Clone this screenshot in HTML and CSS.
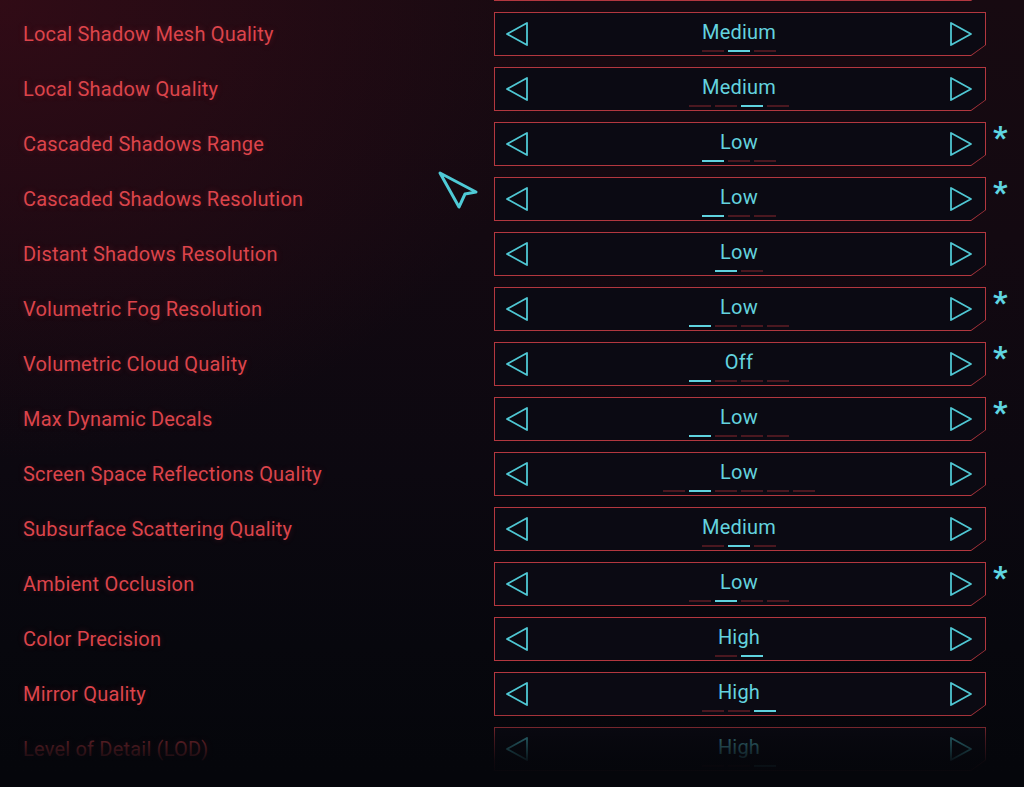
FILE: index.html
```html
<!DOCTYPE html>
<html>
<head>
<meta charset="utf-8">
<link rel="stylesheet" href="styles.css">
</head>
<body>
<div class="screen">
  <div class="list">
    <div class="row">
      <div class="label"></div>
      <div class="sel"><div class="sel-in"></div></div>
      <div class="mark"></div>
    </div>

    <div class="row">
      <div class="label">Local Shadow Mesh Quality</div>
      <div class="sel"><div class="sel-in">
        <svg class="arr" viewBox="0 0 24 26"><polygon points="22,2 2,13 22,24"/></svg>
        <div class="val"><span class="txt">Medium</span><div class="dashes"><i></i><i class="on"></i><i></i></div></div>
        <svg class="arr" viewBox="0 0 24 26"><polygon points="2,2 22,13 2,24"/></svg>
      </div></div>
      <div class="mark"></div>
    </div>

    <div class="row">
      <div class="label">Local Shadow Quality</div>
      <div class="sel"><div class="sel-in">
        <svg class="arr" viewBox="0 0 24 26"><polygon points="22,2 2,13 22,24"/></svg>
        <div class="val"><span class="txt">Medium</span><div class="dashes"><i></i><i></i><i class="on"></i><i></i></div></div>
        <svg class="arr" viewBox="0 0 24 26"><polygon points="2,2 22,13 2,24"/></svg>
      </div></div>
      <div class="mark"></div>
    </div>

    <div class="row">
      <div class="label">Cascaded Shadows Range</div>
      <div class="sel"><div class="sel-in">
        <svg class="arr" viewBox="0 0 24 26"><polygon points="22,2 2,13 22,24"/></svg>
        <div class="val"><span class="txt">Low</span><div class="dashes"><i class="on"></i><i></i><i></i></div></div>
        <svg class="arr" viewBox="0 0 24 26"><polygon points="2,2 22,13 2,24"/></svg>
      </div></div>
      <div class="mark">*</div>
    </div>

    <div class="row">
      <div class="label">Cascaded Shadows Resolution</div>
      <div class="sel"><div class="sel-in">
        <svg class="arr" viewBox="0 0 24 26"><polygon points="22,2 2,13 22,24"/></svg>
        <div class="val"><span class="txt">Low</span><div class="dashes"><i class="on"></i><i></i><i></i></div></div>
        <svg class="arr" viewBox="0 0 24 26"><polygon points="2,2 22,13 2,24"/></svg>
      </div></div>
      <div class="mark">*</div>
    </div>

    <div class="row">
      <div class="label">Distant Shadows Resolution</div>
      <div class="sel"><div class="sel-in">
        <svg class="arr" viewBox="0 0 24 26"><polygon points="22,2 2,13 22,24"/></svg>
        <div class="val"><span class="txt">Low</span><div class="dashes"><i class="on"></i><i></i></div></div>
        <svg class="arr" viewBox="0 0 24 26"><polygon points="2,2 22,13 2,24"/></svg>
      </div></div>
      <div class="mark"></div>
    </div>

    <div class="row">
      <div class="label">Volumetric Fog Resolution</div>
      <div class="sel"><div class="sel-in">
        <svg class="arr" viewBox="0 0 24 26"><polygon points="22,2 2,13 22,24"/></svg>
        <div class="val"><span class="txt">Low</span><div class="dashes"><i class="on"></i><i></i><i></i><i></i></div></div>
        <svg class="arr" viewBox="0 0 24 26"><polygon points="2,2 22,13 2,24"/></svg>
      </div></div>
      <div class="mark">*</div>
    </div>

    <div class="row">
      <div class="label">Volumetric Cloud Quality</div>
      <div class="sel"><div class="sel-in">
        <svg class="arr" viewBox="0 0 24 26"><polygon points="22,2 2,13 22,24"/></svg>
        <div class="val"><span class="txt">Off</span><div class="dashes"><i class="on"></i><i></i><i></i><i></i></div></div>
        <svg class="arr" viewBox="0 0 24 26"><polygon points="2,2 22,13 2,24"/></svg>
      </div></div>
      <div class="mark">*</div>
    </div>

    <div class="row">
      <div class="label">Max Dynamic Decals</div>
      <div class="sel"><div class="sel-in">
        <svg class="arr" viewBox="0 0 24 26"><polygon points="22,2 2,13 22,24"/></svg>
        <div class="val"><span class="txt">Low</span><div class="dashes"><i class="on"></i><i></i><i></i><i></i></div></div>
        <svg class="arr" viewBox="0 0 24 26"><polygon points="2,2 22,13 2,24"/></svg>
      </div></div>
      <div class="mark">*</div>
    </div>

    <div class="row">
      <div class="label">Screen Space Reflections Quality</div>
      <div class="sel"><div class="sel-in">
        <svg class="arr" viewBox="0 0 24 26"><polygon points="22,2 2,13 22,24"/></svg>
        <div class="val"><span class="txt">Low</span><div class="dashes"><i></i><i class="on"></i><i></i><i></i><i></i><i></i></div></div>
        <svg class="arr" viewBox="0 0 24 26"><polygon points="2,2 22,13 2,24"/></svg>
      </div></div>
      <div class="mark"></div>
    </div>

    <div class="row">
      <div class="label">Subsurface Scattering Quality</div>
      <div class="sel"><div class="sel-in">
        <svg class="arr" viewBox="0 0 24 26"><polygon points="22,2 2,13 22,24"/></svg>
        <div class="val"><span class="txt">Medium</span><div class="dashes"><i></i><i class="on"></i><i></i></div></div>
        <svg class="arr" viewBox="0 0 24 26"><polygon points="2,2 22,13 2,24"/></svg>
      </div></div>
      <div class="mark"></div>
    </div>

    <div class="row">
      <div class="label">Ambient Occlusion</div>
      <div class="sel"><div class="sel-in">
        <svg class="arr" viewBox="0 0 24 26"><polygon points="22,2 2,13 22,24"/></svg>
        <div class="val"><span class="txt">Low</span><div class="dashes"><i></i><i class="on"></i><i></i><i></i></div></div>
        <svg class="arr" viewBox="0 0 24 26"><polygon points="2,2 22,13 2,24"/></svg>
      </div></div>
      <div class="mark">*</div>
    </div>

    <div class="row">
      <div class="label">Color Precision</div>
      <div class="sel"><div class="sel-in">
        <svg class="arr" viewBox="0 0 24 26"><polygon points="22,2 2,13 22,24"/></svg>
        <div class="val"><span class="txt">High</span><div class="dashes"><i></i><i class="on"></i></div></div>
        <svg class="arr" viewBox="0 0 24 26"><polygon points="2,2 22,13 2,24"/></svg>
      </div></div>
      <div class="mark"></div>
    </div>

    <div class="row">
      <div class="label">Mirror Quality</div>
      <div class="sel"><div class="sel-in">
        <svg class="arr" viewBox="0 0 24 26"><polygon points="22,2 2,13 22,24"/></svg>
        <div class="val"><span class="txt">High</span><div class="dashes"><i></i><i></i><i class="on"></i></div></div>
        <svg class="arr" viewBox="0 0 24 26"><polygon points="2,2 22,13 2,24"/></svg>
      </div></div>
      <div class="mark"></div>
    </div>

    <div class="row">
      <div class="label">Level of Detail (LOD)</div>
      <div class="sel"><div class="sel-in">
        <svg class="arr" viewBox="0 0 24 26"><polygon points="22,2 2,13 22,24"/></svg>
        <div class="val"><span class="txt">High</span><div class="dashes"><i></i><i></i><i class="on"></i></div></div>
        <svg class="arr" viewBox="0 0 24 26"><polygon points="2,2 22,13 2,24"/></svg>
      </div></div>
      <div class="mark"></div>
    </div>
  </div>

  <svg class="cursor" width="44" height="42" viewBox="0 0 44 42">
    <path d="M3 3 L39 22 L28 24 L22 37 Z"/>
  </svg>
  <div class="fade"></div>
</div>
</body>
</html>
```

FILE: styles.css
```css
html, body {
  margin: 0;
  padding: 0;
}
body {
  width: 1024px;
  height: 787px;
  overflow: hidden;
  background: #06060c;
  font-family: Roboto, "Liberation Sans", sans-serif;
}
.screen {
  position: relative;
  width: 1024px;
  height: 787px;
  overflow: hidden;
  background:
    radial-gradient(ellipse 560px 460px at 0% 0%, rgba(70, 12, 26, 0.55), rgba(70, 12, 26, 0) 100%),
    linear-gradient(180deg, #170a11 0%, #130911 30%, #0c0810 60%, #07070d 82%, #05060b 100%);
}
.list {
  display: flex;
  flex-direction: column;
  gap: 11px;
  margin-top: -43px;
  padding-left: 23px;
}
.row {
  display: grid;
  grid-template-columns: 471px 492px 38px;
  height: 44px;
}
.label {
  display: flex;
  align-items: center;
  color: #dc444b;
  font-size: 20px;
  letter-spacing: 0.2px;
  white-space: nowrap;
  text-shadow: 0 0 6px rgba(220, 60, 70, 0.25);
}
.sel {
  background: #b3373f;
  clip-path: polygon(0 0, 100% 0, 100% calc(100% - 11px), calc(100% - 15px) 100%, 0 100%);
  padding: 1px;
}
.sel-in {
  height: 100%;
  box-sizing: border-box;
  background: #0b0a13;
  clip-path: polygon(0 0, 100% 0, 100% calc(100% - 10px), calc(100% - 14px) 100%, 0 100%);
  display: flex;
  align-items: center;
  justify-content: space-between;
  padding: 0 12px 0 10px;
}
.arr {
  width: 24px;
  height: 26px;
  flex: none;
}
.arr polygon {
  fill: none;
  stroke: #4fc7d3;
  stroke-width: 1.8;
  stroke-linejoin: round;
}
.val {
  align-self: stretch;
  display: flex;
  flex-direction: column;
  align-items: center;
  padding-top: 7px;
}
.txt {
  color: #63d3df;
  font-size: 20px;
  line-height: 24px;
  letter-spacing: 0.2px;
}
.dashes {
  display: flex;
  gap: 4px;
  margin-top: 6px;
}
.dashes i {
  display: block;
  width: 22px;
  height: 2px;
  background: #4a1820;
}
.dashes i.on {
  background: #5fd3df;
}
.mark {
  color: #5fd6e2;
  font-size: 32px;
  font-weight: 700;
  line-height: 30px;
  padding-left: 7px;
}
.cursor {
  position: absolute;
  left: 437px;
  top: 170px;
}
.cursor path {
  fill: none;
  stroke: #4fcad6;
  stroke-width: 3;
  stroke-linejoin: round;
}
.fade {
  position: absolute;
  left: 0;
  right: 0;
  top: 712px;
  height: 75px;
  background: linear-gradient(180deg, rgba(5, 6, 11, 0) 0%, rgba(5, 6, 11, 0.6) 35%, rgba(5, 6, 11, 0.93) 65%, #05060b 85%);
}
```
